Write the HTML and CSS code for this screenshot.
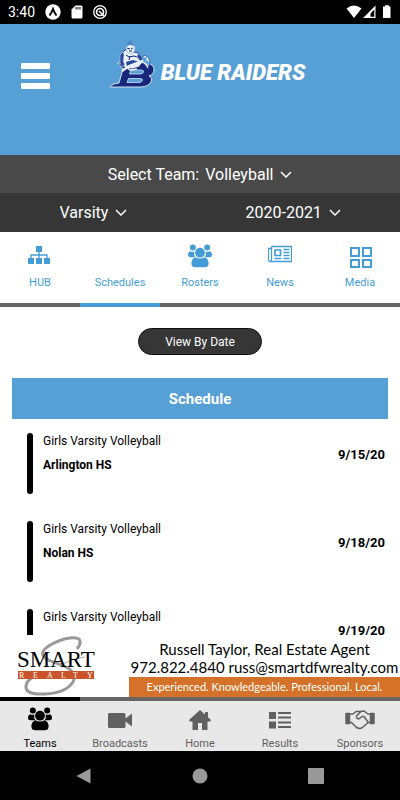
FILE: index.html
```
<!DOCTYPE html>
<html lang="en">
<head>
  <meta charset="UTF-8">
  <meta name="viewport" content="width=device-width, initial-scale=1">
  <title>Blue Raiders</title>
  <link rel="stylesheet" href="styles.css">
</head>
<body>
  <!-- shared icon shapes -->
  <svg class="sprite" aria-hidden="true">
    <symbol id="icon-team" viewBox="0 0 24 24">
      <circle cx="4.800" cy="3.600" r="3"/>
      <circle cx="19.200" cy="3.600" r="3"/>
      <path d="M1.800 7.200q3 1.200 4.600.200-1 3.400 1 5.800H2.500Q0 13.200 0 10.700T1.800 7.200zM22.200 7.200q-3 1.200-4.600.200 1 3.400-1 5.800h4.900q2.500 0 2.500-2.500T22.200 7.200z"/>
      <circle cx="12" cy="8.700" r="4.900"/>
      <path d="M7.400 13.300q4.600 2.400 9.200 0 4 1.400 4 6 0 4-3.600 4H7q-3.600 0-3.600-4 0-4.600 4-6z"/>
    </symbol>
    <symbol id="icon-chevron" viewBox="0 0 12 7">
      <path d="M1 1l5 5 5-5" fill="none" stroke="currentColor" stroke-width="1.500"/>
    </symbol>
  </svg>

  <div id="status">
    <span class="clock">3:40</span>
    <svg width="16" height="16" viewBox="0 0 16 16"><circle cx="8" cy="8" r="7.700" fill="#fff"/><path d="M4.500 11.500Q6.500 9 8 5q1.500 4 3.500 6.500" fill="none" stroke="#000" stroke-width="2"/></svg>
    <svg width="12" height="14" viewBox="0 0 12 14"><path d="M4.500.500H10q1.500 0 1.500 1.500v10q0 1.500-1.500 1.500H2Q.500 13.500.500 12V4.500z" fill="#fff"/><path d="M5 2v2.500M7 2v2.500M9 2v2.500" stroke="#000"/></svg>
    <svg width="14" height="14" viewBox="0 0 14 14" fill="none" stroke="#fff"><circle cx="7" cy="7" r="6.300" stroke-width="1.300"/><circle cx="7" cy="7" r="3.500" stroke-width="1.700"/><path d="m6 6 5 5" stroke-width="1.500"/></svg>
    <span class="spacer"></span>
    <svg width="46" height="14" viewBox="0 0 46 14" fill="#fff"><path d="M.500 3.500Q8-2.500 15.500 3.500L8 13z"/><path d="M17 13 29.500.500V13zM24.500 11.800h3.800V4.500l-3.800 4z" fill-rule="evenodd"/><path d="M37 1.500h2V.200h4v1.300h1.500V13H37z"/></svg>
  </div>

  <header id="header">
    <button type="button" class="menu" aria-label="Menu"><span></span><span></span><span></span></button>
    <div class="brand">
      <svg width="46" height="48" viewBox="0 0 46 48">
        <path d="M8 23h29q9 1 8 8-.5 4-5 5 4 2 2.500 5Q40 47 31 47H1q1-2 4-3l5-1 4-14q-1-2-6-6z" fill="#18267c" stroke="#d3e3f4"/>
        <path d="M22 30h10q3 0 2.500 2T31 34H20.500zM19.500 38.500H31q3 0 2.500 2T29 42.500H18z" fill="#57a0d5" stroke="#d3e3f4" stroke-width=".8"/>
        <path d="m14 12 2-2h2l6 2 6 1 2 4 1 6-3 4-7 2-7-1-2-6z" fill="#e8f1fa" stroke="#18267c" stroke-width=".8"/>
        <path d="m17 8 2-4 3-3 3 3 1 4-1 4-3 2-4-2z" fill="#e8f1fa" stroke="#8fb4dc" stroke-width=".6"/>
        <path d="m17 6 2-4 3-2 2 3 2 3-5-1z" fill="#4a86c5"/>
        <path d="m18 8 3 1m1 0 2-1m-4 3h3m-6 4 3 2 5-1 3 1m-7-1-1 4" fill="none" stroke="#18267c"/>
        <path d="m14 12-3 3v8l3 4 2-2-2-4 1-6zM29 13l4 4 1 5-3-1-3-4z" fill="#28479a" stroke="#d3e3f4" stroke-width=".5"/>
        <path d="m17 22 7-2 6 2-4 3-8 2z" fill="#28479a"/>
        <path d="m32 21 3-6 4 2 2 4-2 8-3-4z" fill="#e8f1fa" stroke="#28479a" stroke-width=".8"/>
        <path d="m33 20 2-3 3 1-2 5zM38 20l2 2-1 4-3-4z" fill="#5aa3dc"/>
        <path d="m13 31 7-5 14-5" fill="none" stroke="#e8f1fa" stroke-width="2.500"/>
        <path d="m15 25 6 5 7-1" fill="none" stroke="#e8f1fa" stroke-width="1.500"/>
      </svg>
      <h1>BLUE RAIDERS</h1>
    </div>
  </header>

  <div class="picker picker-team">
    <label for="team">Select Team:</label>
    <span class="drop"><select id="team"><option>Volleyball</option></select><svg class="chevron"><use href="#icon-chevron"/></svg></span>
  </div>
  <div class="picker picker-split">
    <span class="drop"><select id="level" aria-label="Level"><option>Varsity</option></select><svg class="chevron"><use href="#icon-chevron"/></svg></span>
    <span class="drop"><select id="season" aria-label="Season"><option>2020-2021</option></select><svg class="chevron"><use href="#icon-chevron"/></svg></span>
  </div>

  <nav class="tabs top-tabs">
    <a href="#hub">
      <svg viewBox="0 0 24 24" fill="currentColor"><path d="M8 2h6v6H8zM0 14h6v6H0zM8 14h6v6H8zM16 14h6v6h-6z"/><path d="M11 7v8M3 15v-4h16v4" fill="none" stroke="currentColor" stroke-width="1.300"/></svg>
      HUB
    </a>
    <a href="#schedules" class="active">
      <svg viewBox="0 0 24 24"></svg>
      Schedules
    </a>
    <a href="#rosters">
      <svg viewBox="0 0 24 24" fill="currentColor"><use href="#icon-team"/></svg>
      Rosters
    </a>
    <a href="#news">
      <svg viewBox="0 0 24 24" fill="none" stroke="currentColor" stroke-width="1.300"><path d="M3.500 2.500h20v15H2.500q-2 0-2-2V4.500h3m0-2v13q0 2-1 2M15.500 5.500h6M15.500 8.500h6M15.500 11.500h6M6.500 14.500h7M15.500 14.500h6"/><path d="M7 6h5.500v5.500H7z" stroke-width="1.700"/></svg>
      News
    </a>
    <a href="#media">
      <svg viewBox="0 0 24 24" fill="none" stroke="currentColor" stroke-width="2"><path d="M3 4h8v8H3zM15 4h8v8h-8zM3 16h8v7H3zM15 16h8v7h-8z"/></svg>
      Media
    </a>
  </nav>

  <main id="content">
    <button type="button" class="view-by">View By Date</button>
    <h2>Schedule</h2>
    <ul class="games">
      <li>
        <div class="game">
          <p>Girls Varsity Volleyball</p>
          <strong>Arlington HS</strong>
        </div>
        <time datetime="2020-09-15">9/15/20</time>
      </li>
      <li>
        <div class="game">
          <p>Girls Varsity Volleyball</p>
          <strong>Nolan HS</strong>
        </div>
        <time datetime="2020-09-18">9/18/20</time>
      </li>
      <li>
        <div class="game">
          <p>Girls Varsity Volleyball</p>
        </div>
        <time datetime="2020-09-19">9/19/20</time>
      </li>
    </ul>
  </main>

  <a href="#sponsor" class="sponsor">
    <svg class="sponsor-logo" viewBox="0 0 129 62">
      <path d="M77 14q5-6 2-10Q70 0 52 9q-13 7-8 13 4 4 18 8 16 7 11 17-7 11-28 12-20 1-19-8 1-8 12-11" fill="none" stroke="#999" stroke-width="3"/>
      <path d="M63 29q8-5 22-7" fill="none" stroke="#aaa"/>
      <text x="17" y="32" class="logo-name">SMART</text>
      <path d="M18 36h76v8H18z" fill="#c9532b"/>
      <text y="43" class="logo-sub"><tspan x="19">R</tspan><tspan x="33">E</tspan><tspan x="47">A</tspan><tspan x="61">L</tspan><tspan x="73">T</tspan><tspan x="87">Y</tspan></text>
    </svg>
    <div class="sponsor-info">
      <p>Russell Taylor, Real Estate Agent</p>
      <p>972.822.4840 russ@smartdfwrealty.com</p>
      <p class="slogan">Experienced. Knowledgeable. Professional. Local.</p>
    </div>
  </a>

  <nav class="tabs bottom-tabs">
    <a href="#teams" class="active">
      <svg viewBox="0 0 24 24" fill="currentColor"><use href="#icon-team"/></svg>
      Teams
    </a>
    <a href="#broadcasts">
      <svg viewBox="0 0 24 24" fill="currentColor"><path d="M1.500 6H16q1.500 0 1.500 1.500v4L24 6.500v13l-6.500-5v5q0 1.500-1.500 1.500H1.500Q0 21 0 19.500v-12Q0 6 1.500 6z"/></svg>
      Broadcasts
    </a>
    <a href="#home">
      <svg viewBox="0 0 24 24" fill="currentColor"><path d="m12 3 5 4.500V5h3v5.200l3 2.800-1 1.500h-2.500V23H14v-7h-4v7H4.500v-8.500H2L1 13z"/></svg>
      Home
    </a>
    <a href="#results">
      <svg viewBox="0 0 24 24" fill="currentColor"><path d="M1 5h7v7H1zM1 14.500h7v7H1zM10 5h13v2H10zM10 9.500h13v2H10zM10 14.500h13v2H10zM10 19h13v2H10z"/></svg>
      Results
    </a>
    <a href="#sponsors">
      <svg class="wide" viewBox="0 0 30 24" fill="none" stroke="currentColor" stroke-width="1.500" stroke-linejoin="round"><path d="M1 6.500h3.500v10H1zM25.500 6.500H29v10h-3.500z" fill="currentColor"/><path d="M5 7h3l3-2.500h4.500L19 4l4 3h2M5 15.500h1.500l5 5q4 2 6.500-.500l4-3.500 1-1h2M16 4.500 11.500 9q0 3.500 3 2.500L17 9.500h2l4 5.500"/></svg>
      Sponsors
    </a>
  </nav>

  <div id="sysnav">
    <button type="button" aria-label="Back"><svg width="16" height="16" viewBox="0 0 16 16"><path d="M14.500.500v15L.500 8z"/></svg></button>
    <button type="button" aria-label="Home screen"><svg width="16" height="16" viewBox="0 0 16 16"><circle cx="8" cy="8" r="7.500"/></svg></button>
    <button type="button" aria-label="Recent apps"><svg width="16" height="16" viewBox="0 0 16 16"><rect width="16" height="16" rx="1"/></svg></button>
  </div>
</body>
</html>
```

FILE: styles.css
```
* {
  box-sizing: border-box;
}
body {
  display: flex;
  flex-direction: column;
  height: 100vh;
  margin: 0;
  background: #fff;
  color: #000;
  font-family: Roboto, Arial, sans-serif;
}
h1, h2, p, ul {
  margin: 0;
  padding: 0;
}
button, select {
  font-family: inherit;
}
svg {
  display: block;
}
.sprite {
  position: absolute;
  width: 0;
  height: 0;
}

/* phone status bar */
#status {
  display: flex;
  flex: none;
  align-items: center;
  gap: 10px;
  height: 24px;
  padding: 0 8px;
  background: #000;
  color: #fff;
  font-size: 14px;
}
.spacer {
  flex: 1;
}

#header {
  display: grid;
  grid-template-columns: 60px 1fr 46px;
  align-items: center;
  flex: none;
  height: 131px;
  padding-bottom: 27px;
  background: #57a0d5;
}
.menu {
  display: flex;
  flex-direction: column;
  gap: 4px;
  width: 29px;
  margin-left: 21px;
  padding: 0;
  border: 0;
  background: none;
}
.menu span {
  height: 6px;
  border-radius: 1px;
  background: #fff;
}
.brand {
  display: flex;
  justify-content: center;
  align-items: center;
  gap: 6px;
  padding-bottom: 24px;
}
h1 {
  padding-top: 18px;
  color: #fff;
  font-size: 22px;
  font-style: italic;
  font-weight: 900;
  line-height: 24px;
  white-space: nowrap;
}

/* team, level and season */
.picker {
  display: flex;
  justify-content: center;
  align-items: center;
  flex: none;
  gap: 6px;
  height: 38px;
  background: #494949;
  color: #fff;
  font-size: 16px;
}
.picker-split {
  display: grid;
  grid-template-columns: 1fr 1fr;
  gap: 0;
  height: 39px;
  background: #363636;
}
.picker-split .drop {
  padding-right: 14px;
}
.drop {
  display: flex;
  justify-content: center;
  align-items: center;
  gap: 6px;
}
select {
  appearance: none;
  padding: 0;
  border: 0;
  background: none;
  color: #fff;
  font-size: 16px;
}
.chevron {
  width: 12px;
  height: 7px;
}

.tabs {
  display: grid;
  grid-template-columns: repeat(5, 1fr);
  flex: none;
  font-size: 11px;
  line-height: 14px;
}
.tabs a {
  display: flex;
  flex-direction: column;
  align-items: center;
  text-decoration: none;
}
.tabs svg {
  flex: none;
  width: 24px;
  height: 24px;
}
.tabs .wide {
  width: 30px;
}
.top-tabs a {
  gap: 8px;
  height: 75px;
  padding-top: 12px;
  border-bottom: 4px solid #666;
  color: #459dd7;
}
.top-tabs .active {
  border-color: #459dd7;
}
.bottom-tabs {
  background: #e8e8e8;
}
.bottom-tabs a {
  gap: 6px;
  height: 54px;
  padding-top: 6px;
  border-top: 4px solid #666;
  color: #606060;
}
.bottom-tabs .active {
  border-color: #000;
  color: #000;
}

#content {
  flex: 1;
  min-height: 0;
  overflow: hidden;
  padding: 21px 12px 0;
}
.view-by {
  display: block;
  width: 124px;
  height: 27px;
  margin: 0 auto 23px;
  border: 1px solid #111;
  border-radius: 14px;
  background: #363636;
  color: #fff;
  font-size: 12px;
}
h2 {
  padding-top: 1px;
  background: #57a0d5;
  color: #fff;
  font-size: 15px;
  line-height: 40px;
  text-align: center;
}
.games {
  padding: 14px 3px 0 15px;
  list-style: none;
  font-size: 12px;
}
.games li {
  display: flex;
  gap: 10px;
  height: 61px;
  margin-bottom: 27px;
}
.games li::before {
  content: "";
  width: 6px;
  border-radius: 3px;
  background: #000;
}
.game {
  display: flex;
  flex: 1;
  flex-direction: column;
  gap: 8px;
  line-height: 16px;
}
.games time {
  padding-top: 14px;
  font-size: 13px;
  font-weight: 700;
  line-height: 16px;
}

.sponsor {
  display: flex;
  flex: none;
  height: 62px;
  background: #fff;
  color: #000;
  font-family: Lato, sans-serif;
  text-decoration: none;
}
.sponsor-logo {
  width: 129px;
  height: 62px;
}
.logo-name {
  font: 23px "Liberation Serif", serif;
}
.logo-sub {
  fill: #fff;
  font: 8px "Liberation Serif", serif;
}
.sponsor-info {
  flex: 1;
  padding-top: 5px;
  font-size: 15px;
  line-height: 18px;
  text-align: center;
  white-space: nowrap;
}
.sponsor-info .slogan {
  margin-top: 1px;
  background: #d37228;
  color: #fff;
  font-size: 11px;
  line-height: 20px;
}

/* system navigation */
#sysnav {
  display: flex;
  justify-content: center;
  align-items: center;
  flex: none;
  gap: 100px;
  height: 49px;
  background: #000;
}
#sysnav button {
  padding: 0;
  border: 0;
  background: none;
}
#sysnav svg {
  fill: #999;
}
```
